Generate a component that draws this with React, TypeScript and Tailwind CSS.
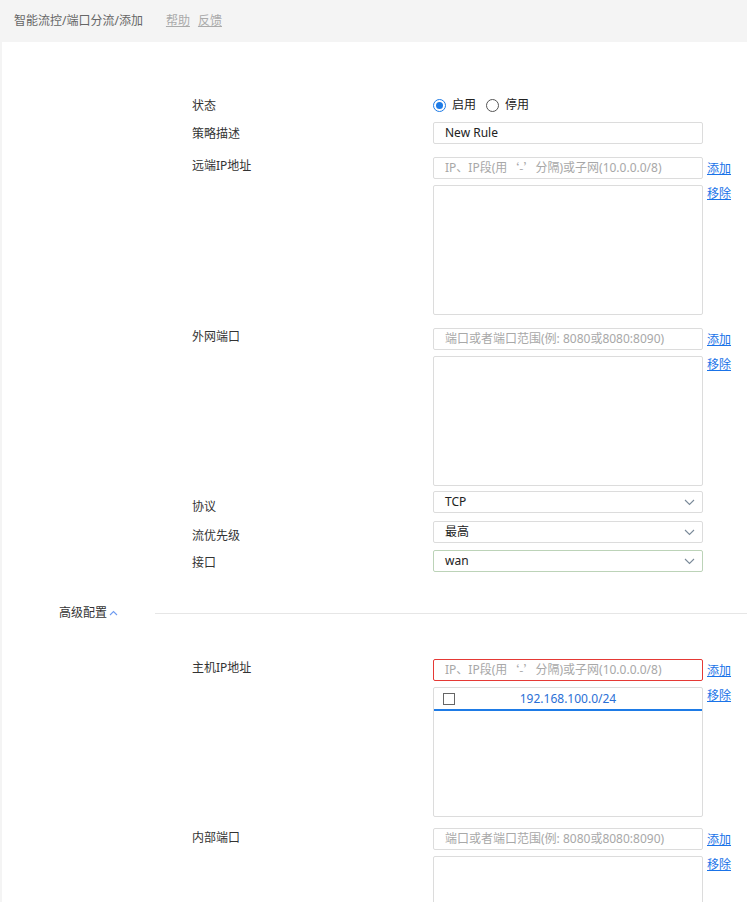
import type { ReactNode } from "react";

const FONT = { fontFamily: '"Noto Sans", "Noto Sans CJK SC", sans-serif' };

function Chevron() {
  return (
    <svg width="11" height="7" viewBox="0 0 11 7" className="shrink-0">
      <path d="M1 1l4.5 4.5L10 1" fill="none" stroke="#7a8a99" strokeWidth="1.1" />
    </svg>
  );
}

function Links() {
  return (
    <div className="flex w-[40px] flex-col pl-[4px] text-[12px] text-[#1a73e8]">
      <a className="mt-[4px] leading-4 underline">添加</a>
      <a className="mt-[9px] leading-4 underline">移除</a>
    </div>
  );
}

function Row({
  label,
  labelPad,
  mt,
  children,
  side,
}: {
  label: string;
  labelPad: string;
  mt: string;
  children: ReactNode;
  side?: ReactNode;
}) {
  return (
    <div className={`flex items-start pl-[190px] ${mt}`}>
      <div className={`h-[22px] w-[241px] text-[12px] leading-4 text-[#333] ${labelPad}`}>{label}</div>
      <div className="flex w-[270px] flex-col">{children}</div>
      {side}
    </div>
  );
}

function TextInput({ value, placeholder, error }: { value?: string; placeholder?: ReactNode; error?: boolean }) {
  return (
    <div
      className={`flex h-[22px] items-center whitespace-nowrap rounded-[2px] border px-[11px] text-[12px] ${
        error ? "border-[#e53935]" : "border-[#dcdcdc]"
      } ${value ? "text-[#222]" : "text-[#a8a8a8]"}`}
    >
      {value ?? placeholder}
    </div>
  );
}

function Select({ value, green }: { value: string; green?: boolean }) {
  return (
    <div
      className={`flex h-[22px] items-center justify-between rounded-[2px] border pl-[11px] pr-[7px] text-[12px] text-[#222] ${
        green ? "border-[#bcd3b8]" : "border-[#dcdcdc]"
      }`}
    >
      <span>{value}</span>
      <Chevron />
    </div>
  );
}

function Box({ children }: { children?: ReactNode }) {
  return <div className="mt-[6px] h-[130px] rounded-[2px] border border-[#dcdcdc]">{children}</div>;
}

function Radio({ checked, label }: { checked?: boolean; label: string }) {
  return (
    <span className="flex items-center gap-[6px]">
      <span
        className={`flex h-[13px] w-[13px] items-center justify-center rounded-full border ${
          checked ? "border-[#1e7be6]" : "border-[#555]"
        }`}
      >
        {checked && <span className="h-[7px] w-[7px] rounded-full bg-[#1e7be6]" />}
      </span>
      <span className="text-[12px] text-[#222]">{label}</span>
    </span>
  );
}

const ipHint = (
  <>
    IP、IP段(用 <span style={{ fontFamily: '"Noto Sans CJK SC", sans-serif' }}>‘-’</span> 分隔)或子网(10.0.0.0/8)
  </>
);
const portHint = "端口或者端口范围(例: 8080或8080:8090)";

export default function App() {
  return (
    <div className="min-h-screen bg-[#f4f4f4]" style={FONT}>
      <div className="flex h-[42px] items-center pl-[14px] text-[12px]">
        <span className="text-[#666]">智能流控/端口分流/添加</span>
        <a className="ml-[23px] text-[#aaa] underline">帮助</a>
        <a className="ml-[8px] text-[#aaa] underline">反馈</a>
      </div>

      <div className="ml-[2px] overflow-hidden bg-white pb-[40px] pt-[52px]">
        <Row label="状态" labelPad="pt-[4px]" mt="mt-0">
          <div className="flex h-[22px] items-center gap-[10px]">
            <Radio checked label="启用" />
            <Radio label="停用" />
          </div>
        </Row>

        <Row label="策略描述" labelPad="pt-[4px]" mt="mt-[6px]">
          <TextInput value="New Rule" />
        </Row>

        <Row label="远端IP地址" labelPad="pt-[1px]" mt="mt-[13px]" side={<Links />}>
          <TextInput placeholder={ipHint} />
          <Box />
        </Row>

        <Row label="外网端口" labelPad="pt-[1px]" mt="mt-[13px]" side={<Links />}>
          <TextInput placeholder={portHint} />
          <Box />
        </Row>

        <Row label="协议" labelPad="pt-[8px]" mt="mt-[5px]">
          <Select value="TCP" />
        </Row>
        <Row label="流优先级" labelPad="pt-[7px]" mt="mt-[8px]">
          <Select value="最高" />
        </Row>
        <Row label="接口" labelPad="pt-[5px]" mt="mt-[7px]">
          <Select value="wan" green />
        </Row>

        <div className="mt-[31px] flex h-[20px] items-center pl-[57px]">
          <span className="text-[12px] text-[#333]">高级配置</span>
          <svg width="9" height="6" viewBox="0 0 9 6" className="ml-[2px]">
            <path d="M1 5l3.5-3.5L8 5" fill="none" stroke="#6f9cf0" strokeWidth="1.1" />
          </svg>
          <div className="ml-[37px] h-px flex-1 bg-[#e6e6e6]" />
        </div>

        <Row label="主机IP地址" labelPad="pt-[1px]" mt="mt-[36px]" side={<Links />}>
          <TextInput placeholder={ipHint} error />
          <Box>
            <div className="flex h-[23px] items-center border-b-2 border-[#1e7be6]">
              <span className="ml-[9px] h-[12px] w-[12px] border border-[#666]" />
              <span className="flex-1 text-center text-[12px] text-[#2a6fd6]">192.168.100.0/24</span>
              <span className="w-[21px]" />
            </div>
          </Box>
        </Row>

        <Row label="内部端口" labelPad="pt-[2px]" mt="mt-[11px]" side={<Links />}>
          <TextInput placeholder={portHint} />
          <Box />
        </Row>
      </div>
    </div>
  );
}
